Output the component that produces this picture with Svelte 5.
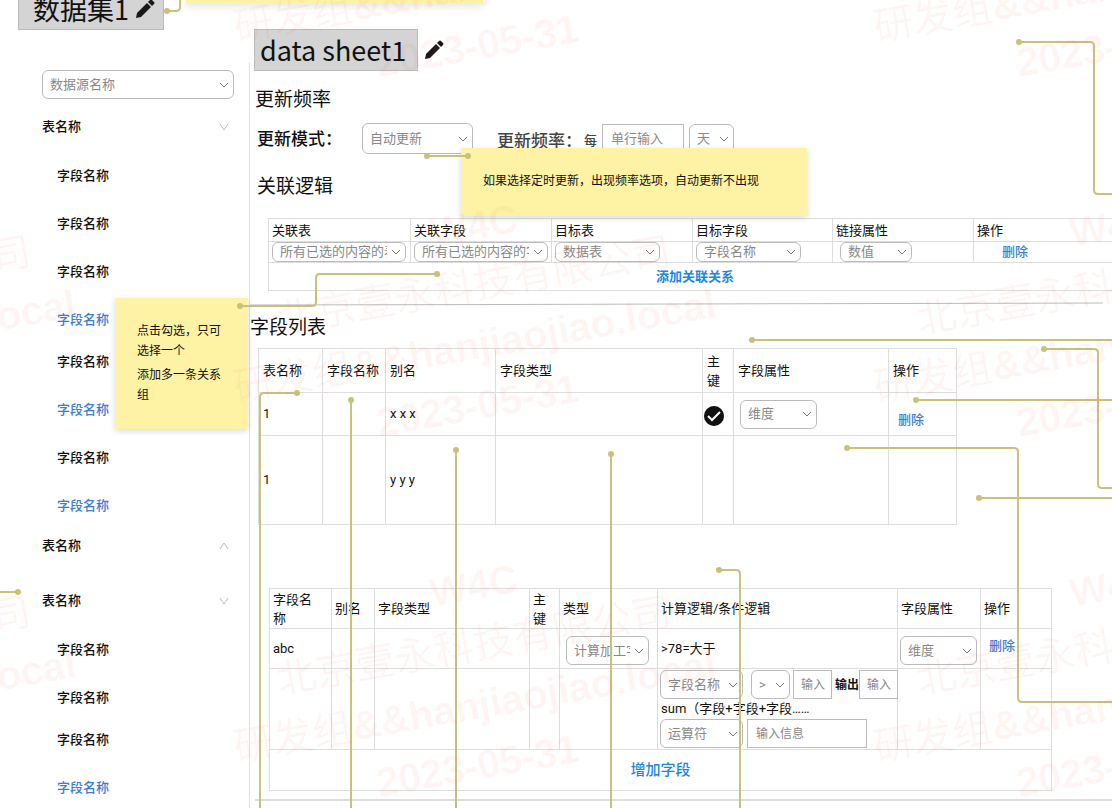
<script lang="ts">
	type Field = { name: string; linked?: boolean };
	type Point = [number, number];

	const plain: Field = { name: '字段名称' };
	const linked: Field = { name: '字段名称', linked: true };

	const tree: { name: string; open: boolean; groups: Field[][] }[] = [
		{ name: '表名称', open: false, groups: [[plain, plain, plain, linked], [plain, linked, plain, linked]] },
		{ name: '表名称', open: true, groups: [] },
		{ name: '表名称', open: false, groups: [[plain, plain], [plain, linked]] }
	];

	const relationCols = [
		{ title: '关联表', width: 142 },
		{ title: '关联字段', width: 141 },
		{ title: '目标表', width: 141 },
		{ title: '目标字段', width: 140 },
		{ title: '链接属性', width: 141 },
		{ title: '操作', width: 148 }
	];

	const fieldCols = [
		{ title: '表名称', width: 64 },
		{ title: '字段名称', width: 63 },
		{ title: '别名', width: 110 },
		{ title: '字段类型', width: 207 },
		{ title: '主键', width: 31 },
		{ title: '字段属性', width: 155 },
		{ title: '操作', width: 68 }
	];

	const calcCols = [
		{ title: '字段名称', width: 62 },
		{ title: '别名', width: 43 },
		{ title: '字段类型', width: 155 },
		{ title: '主键', width: 30 },
		{ title: '类型', width: 98 },
		{ title: '计算逻辑/条件逻辑', width: 240 },
		{ title: '字段属性', width: 83 },
		{ title: '操作', width: 71 }
	];

	// connector lines between notes and the controls they describe
	const connectors: { d: string; dots: Point[] }[] = [
		{ d: 'M167 11H176Q180 11 180 7V0', dots: [[167, 11]] },
		{ d: 'M427 156H468', dots: [[427, 156], [468, 156]] },
		{ d: 'M1019 42H1090Q1094 42 1094 46V190Q1094 194 1098 194H4000', dots: [[1019, 42]] },
		{ d: 'M437 274H320Q316 274 316 278V302Q316 306 312 306H240', dots: [[437, 274], [240, 306]] },
		{ d: 'M297 393H264Q260 393 260 397V4000', dots: [[297, 393]] },
		{ d: 'M351 400V4000', dots: [[351, 400]] },
		{ d: 'M456 450V4000', dots: [[456, 450]] },
		{ d: 'M611 454V4000', dots: [[611, 454]] },
		{ d: 'M719 570H736Q740 570 740 574V4000', dots: [[719, 570]] },
		{ d: 'M752 340H4000', dots: [[752, 340]] },
		{ d: 'M1044 349H1094Q1098 349 1098 353V484Q1098 488 1102 488H4000', dots: [[1044, 349]] },
		{ d: 'M916 400H4000', dots: [[916, 400]] },
		{ d: 'M847 448H1014Q1018 448 1018 452V698Q1018 702 1022 702H4000', dots: [[847, 448]] },
		{ d: 'M979 498H4000', dots: [[979, 498]] },
		{ d: 'M0 592H18', dots: [[18, 592]] }
	];

	const marks: Point[] = [-137, 223, 583].flatMap((y) => [-164, 476, 1116].map((x): Point => [x, y]));

	let primary = $state(true);
</script>

{#snippet pencil()}
	<svg class="pencil" viewBox="0 0 20 20" aria-hidden="true">
		<path d="M1 19l1-5L12 4l4 4L6 18z" />
		<path d="M13 3l2-2q1-1 2 0l2 2q1 1 0 2l-2 2z" />
	</svg>
{/snippet}

{#snippet picker(label: string, value: string, size: string, id?: string)}
	<span class="picker {size}">
		<select {id} aria-label={label}>
			<option>{value}</option>
		</select>
		<svg viewBox="0 0 10 6" aria-hidden="true"><path d="M1 1l4 4 4-4" /></svg>
	</span>
{/snippet}

{#snippet head(cols: { title: string; width: number }[])}
	<colgroup>
		{#each cols as c}
			<col style="width: {c.width}px" />
		{/each}
	</colgroup>
	<thead>
		<tr>
			{#each cols as c}
				<th>{c.title}</th>
			{/each}
		</tr>
	</thead>
{/snippet}

<div class="page">
	<aside>
		<div class="set-title">
			<h1>数据集1</h1>
			<button aria-label="编辑数据集">{@render pencil()}</button>
		</div>

		<nav>
			{@render picker('数据源', '数据源名称', 'full')}
			{#each tree as node}
				<button class="node" aria-expanded={node.open}>
					{node.name}
					<svg viewBox="0 0 10 8" aria-hidden="true">
						<path d={node.open ? 'M1 7l4-6 4 6' : 'M1 1l4 6 4-6'} />
					</svg>
				</button>
				{#each node.groups as group}
					<ul>
						{#each group as field}
							<li class:linked={field.linked}>{field.name}</li>
						{/each}
					</ul>
				{/each}
			{/each}
		</nav>
	</aside>

	<main>
		<div class="sheet-title">
			<h2>data sheet1</h2>
			<button aria-label="编辑名称">{@render pencil()}</button>
		</div>

		<h3 class="update">更新频率</h3>
		<div class="update-row">
			<label for="mode">更新模式：</label>
			{@render picker('更新模式', '自动更新', 'mode', 'mode')}
			<div class="rate">
				<label for="rate">更新频率：</label>
				<span class="every">每</span>
				<input id="rate" class="rate-input" placeholder="单行输入" />
				{@render picker('单位', '天', 'unit')}
			</div>
		</div>

		<h3 class="relation">关联逻辑</h3>
		<table class="relation-table">
			{@render head(relationCols)}
			<tbody>
				<tr>
					<td>{@render picker('关联表', '所有已选的内容的表', 'slim wide')}</td>
					<td>{@render picker('关联字段', '所有已选的内容的字段', 'slim wide')}</td>
					<td>{@render picker('目标表', '数据表', 'slim mid')}</td>
					<td>{@render picker('目标字段', '字段名称', 'slim mid')}</td>
					<td>{@render picker('链接属性', '数值', 'slim short')}</td>
					<td><button class="remove">删除</button></td>
				</tr>
			</tbody>
			<tfoot>
				<tr><td colspan="6"><button class="add">添加关联关系</button></td></tr>
			</tfoot>
		</table>

		<svg class="rule" viewBox="0 0 100 4" preserveAspectRatio="none" aria-hidden="true">
			<path d="M0 3L100 1" />
		</svg>

		<h3>字段列表</h3>
		<table class="field-table">
			{@render head(fieldCols)}
			<tbody>
				<tr>
					<td>1</td>
					<td></td>
					<td>x x x</td>
					<td></td>
					<td>
						<label class="tick">
							<input type="checkbox" bind:checked={primary} aria-label="主键" />
							{#if primary}
								<svg viewBox="0 0 20 20" aria-hidden="true">
									<circle cx="10" cy="10" r="10" />
									<path d="M4 10l4 4 8-8" />
								</svg>
							{/if}
						</label>
					</td>
					<td>{@render picker('字段属性', '维度', 'prop')}</td>
					<td><button class="remove">删除</button></td>
				</tr>
				<tr class="tall">
					<td>1</td>
					<td></td>
					<td>y y y</td>
					<td></td>
					<td></td>
					<td></td>
					<td></td>
				</tr>
			</tbody>
		</table>

		<table class="calc-table">
			{@render head(calcCols)}
			<tbody>
				<tr>
					<td>abc</td>
					<td></td>
					<td></td>
					<td></td>
					<td>{@render picker('类型', '计算加工字段', 'kind')}</td>
					<td>&gt;78=大于</td>
					<td>{@render picker('字段属性', '维度', 'prop')}</td>
					<td><button class="remove">删除</button></td>
				</tr>
				<tr class="logic">
					<td></td>
					<td></td>
					<td></td>
					<td></td>
					<td></td>
					<td>
						<div class="line">
							{@render picker('字段', '字段名称', 'kind')}
							{@render picker('条件', '>', 'op')}
							<input class="small" placeholder="输入" aria-label="条件值" />
							<label for="output">输出</label>
							<input id="output" class="small" placeholder="输入" />
						</div>
						<p>sum（字段+字段+字段……</p>
						<div class="line">
							{@render picker('运算符', '运算符', 'kind')}
							<input class="info" placeholder="输入信息" aria-label="输入信息" />
						</div>
					</td>
					<td></td>
					<td></td>
				</tr>
			</tbody>
			<tfoot>
				<tr><td colspan="8"><button class="add">增加字段</button></td></tr>
			</tfoot>
		</table>
		<hr />
	</main>

	<div class="note top"></div>
	<div class="note rate-note">
		<p>如果选择定时更新，出现频率选项，自动更新不出现</p>
	</div>
	<div class="note pick-note">
		<p>点击勾选，只可选择一个</p>
		<p>添加多一条关系组</p>
	</div>

	<svg class="overlay" aria-hidden="true">
		{#each connectors as c}
			<path d={c.d} />
			{#each c.dots as [x, y]}
				<circle cx={x} cy={y} r="3" />
			{/each}
		{/each}
	</svg>

	<svg class="overlay watermark" aria-hidden="true">
		{#each marks as [x, y]}
			<g transform="translate({x} {y})">
				<text transform="translate(0 16) rotate(-10)">W4C</text>
				<text class="han" transform="translate(0 76) rotate(-10)">北京壹永科技有限公司</text>
				<text transform="translate(1 136) rotate(-10)"><tspan class="han">研发组</tspan>&amp;&amp;hanjiaojiao.local</text>
				<text transform="translate(4 196) rotate(-10)">2023-05-31</text>
			</g>
		{/each}
	</svg>
</div>

<style>
	:global(body) {
		margin: 0;
		background: #fff;
	}

	.page {
		position: relative;
		display: grid;
		grid-template-columns: 250px minmax(0, 1fr);
		height: 100vh;
		overflow: hidden;
		color: #111;
		font-family: Roboto, "Noto Sans CJK SC", sans-serif;
		font-size: 13px;
		line-height: 20px;
	}

	.page * {
		box-sizing: border-box;
	}

	h1,
	h2,
	h3,
	p,
	ul {
		margin: 0;
		padding: 0;
		font-weight: 400;
	}

	button {
		padding: 0;
		border: 0;
		background: none;
		color: inherit;
		font: inherit;
		cursor: pointer;
	}

	.pencil {
		display: block;
		width: 20px;
		height: 20px;
		fill: #1a1718;
	}

	/* sidebar */
	.set-title {
		display: flex;
		align-items: center;
		gap: 6px;
		width: 146px;
		height: 42px;
		margin: -12px 0 32px 18px;
		padding: 0 0 0 14px;
		border: 1px solid #bbb;
		background: #d4d4d4;
	}

	.set-title h1,
	.sheet-title h2 {
		font-family: "Noto Sans CJK SC", sans-serif;
		font-size: 27px;
		line-height: 40px;
		white-space: nowrap;
	}

	nav {
		display: flex;
		flex-direction: column;
		min-height: 100vh;
		padding: 8px 15px 0 42px;
		border-right: 1px solid #e2e2e2;
	}

	.node {
		display: flex;
		align-items: center;
		justify-content: space-between;
		margin-top: 18px;
		padding-right: 5px;
		font-weight: 500;
	}

	ul + .node {
		margin-top: 20px;
	}

	.node + .node {
		margin-top: 35px;
	}

	.node svg {
		width: 10px;
		height: 8px;
		fill: none;
		stroke: #bbb;
	}

	ul {
		display: flex;
		flex-direction: column;
		gap: 28px;
		margin-top: 29px;
		padding-left: 15px;
		font-weight: 500;
		list-style: none;
	}

	ul + ul {
		margin-top: 22px;
	}

	.linked {
		color: #3c7dd0;
	}

	/* form controls */
	.picker {
		position: relative;
		display: inline-block;
		flex: none;
		height: 29px;
		vertical-align: top;
	}

	select {
		width: 100%;
		height: 100%;
		padding: 0 18px 0 7px;
		border: 1px solid #bbb;
		border-radius: 6px;
		appearance: none;
		background: #fff;
		color: #888;
		font: inherit;
		line-height: 18px;
	}

	.picker svg {
		position: absolute;
		top: calc(50% - 3px);
		right: 5px;
		width: 10px;
		height: 6px;
		fill: none;
		stroke: #777;
		pointer-events: none;
	}

	.full { width: 100%; }
	.mode { width: 111px; height: 31px; }
	.unit { width: 45px; height: 30px; }
	.prop { width: 77px; }
	.kind { width: 83px; }
	.op { width: 39px; }
	.slim { height: 20px; }
	.wide { width: 134px; }
	.mid { width: 105px; }
	.short { width: 72px; margin-left: 4px; }

	input:not([type]) {
		flex: none;
		height: 29px;
		padding: 0 8px;
		border: 1px solid #bbb;
		border-radius: 0;
		background: #fff;
		color: #888;
		font: inherit;
	}

	input::placeholder {
		color: #888;
		opacity: 1;
	}

	.rate-input {
		width: 82px;
	}

	.page input.small {
		width: 39px;
		padding: 0 0 0 7px;
		font-size: 12px;
	}

	.page input.info {
		width: 120px;
		margin-left: 1px;
		font-size: 12px;
	}

	/* main column */
	main {
		padding-top: 29px;
	}

	.sheet-title {
		display: flex;
		align-items: center;
		gap: 6px;
		margin-left: 4px;
	}

	.sheet-title h2 {
		width: 164px;
		padding-left: 5px;
		border: 1px solid #bbb;
		background: #d4d4d4;
	}

	h3 {
		font-size: 19px;
		line-height: 28px;
	}

	.update {
		margin: 15px 0 9px 5px;
	}

	.update-row {
		display: flex;
		align-items: center;
		margin-left: 7px;
	}

	.update-row label {
		width: 85px;
		font-size: 17px;
		font-weight: 500;
		white-space: nowrap;
	}

	.update-row > label {
		margin-right: 20px;
	}

	.rate {
		display: flex;
		align-items: center;
		gap: 5px;
		margin-left: 24px;
		color: #444;
	}

	.update-row .rate label {
		width: 82px;
		padding-top: 4px;
	}

	.every {
		padding-top: 4px;
		font-weight: 500;
	}

	.relation {
		margin: 19px 0 17px 7px;
	}

	table {
		border-collapse: collapse;
		table-layout: fixed;
	}

	th,
	td {
		padding: 0 3px;
		border: 1px solid #ddd;
		font-weight: 400;
		text-align: left;
	}

	th {
		line-height: 19px;
	}

	.remove {
		color: #3c7dd0;
		font-weight: 500;
	}

	.add {
		color: #1b87dd;
		font-weight: 700;
	}

	tfoot td {
		text-align: center;
	}

	.relation-table {
		width: calc(100% - 9px);
		margin-left: 18px;
	}

	.relation-table th {
		height: 23px;
	}

	.relation-table td {
		height: 21px;
	}

	.relation-table .remove {
		display: block;
		margin-left: 25px;
	}

	.relation-table tfoot td {
		height: 28px;
	}

	.rule {
		display: block;
		width: calc(100% - 9px);
		height: 4px;
		margin: 11px 0 8px;
		fill: none;
		stroke: #bbb;
		stroke-width: 1;
	}

	.field-table {
		width: 698px;
		margin: 6px 0 0 8px;
	}

	.field-table th,
	.field-table td {
		padding-left: 4px;
	}

	.field-table tr {
		height: 43px;
	}

	.field-table thead tr {
		height: 44px;
	}

	.field-table .tall {
		height: 89px;
	}

	.field-table .picker {
		margin-left: 2px;
	}

	.field-table .remove {
		margin: 12px 0 0 5px;
	}

	.tick {
		position: relative;
		display: block;
		width: 20px;
		height: 20px;
		margin: 4px 0 0 -3px;
	}

	.tick input {
		width: 20px;
		height: 20px;
		margin: 0;
		border: 1px solid #bbb;
		border-radius: 50%;
		appearance: none;
	}

	.tick svg {
		position: absolute;
		inset: 0;
		fill: #111;
		pointer-events: none;
	}

	.tick path {
		fill: none;
		stroke: #fff;
		stroke-width: 2;
	}

	.calc-table {
		width: 782px;
		margin: 63px 0 0 19px;
	}

	.calc-table tr {
		height: 40px;
	}

	.calc-table th {
		padding-right: 10px;
	}

	.calc-table .kind {
		margin-left: 3px;
	}

	.calc-table .prop {
		margin-left: -1px;
	}

	.calc-table .picker {
		margin-top: 4px;
	}

	.calc-table .remove {
		margin: 0 0 6px 5px;
	}

	.calc-table .logic {
		height: 81px;
	}

	.logic td {
		padding-right: 0;
	}

	.line {
		display: flex;
		align-items: center;
		gap: 3px;
		margin-left: -1px;
	}

	.logic .line .picker {
		margin: 0;
	}

	.logic .line .op {
		margin-left: 5px;
	}

	.line label {
		width: 24px;
		margin-right: -3px;
		font-size: 12px;
		font-weight: 700;
		white-space: nowrap;
	}

	.calc-table tfoot tr {
		height: 41px;
	}

	.calc-table .add {
		font-size: 15px;
		font-weight: 500;
	}

	hr {
		height: 2px;
		margin: 8px 0 0 5px;
		border: 0;
		background: #ddd;
	}

	/* sticky notes and connectors */
	.note {
		position: absolute;
		background: #fef3a5;
		box-shadow: 0 2px 6px rgba(0, 0, 0, 0.15);
		color: #111;
		font-size: 12px;
	}

	.top {
		top: 0;
		left: 186px;
		width: 297px;
		height: 4px;
	}

	.rate-note {
		top: 148px;
		left: 461px;
		width: 346px;
		padding: 23px 22px 25px;
	}

	.pick-note {
		top: 298px;
		left: 115px;
		width: 133px;
		padding: 23px 22px 24px;
	}

	.pick-note p + p {
		margin-top: 4px;
	}

	.overlay {
		position: absolute;
		inset: 0;
		width: 100%;
		height: 100%;
		fill: #c9c07c;
		pointer-events: none;
	}

	.overlay path {
		fill: none;
		stroke: #c9c07c;
		stroke-width: 2;
	}

	.watermark {
		fill: rgba(240, 90, 60, 0.06);
		font-family: "Liberation Sans", sans-serif;
		font-size: 40px;
		font-weight: 700;
		text-anchor: middle;
	}

	.han {
		font-family: "Noto Sans CJK SC", sans-serif;
		font-weight: 400;
	}
</style>
